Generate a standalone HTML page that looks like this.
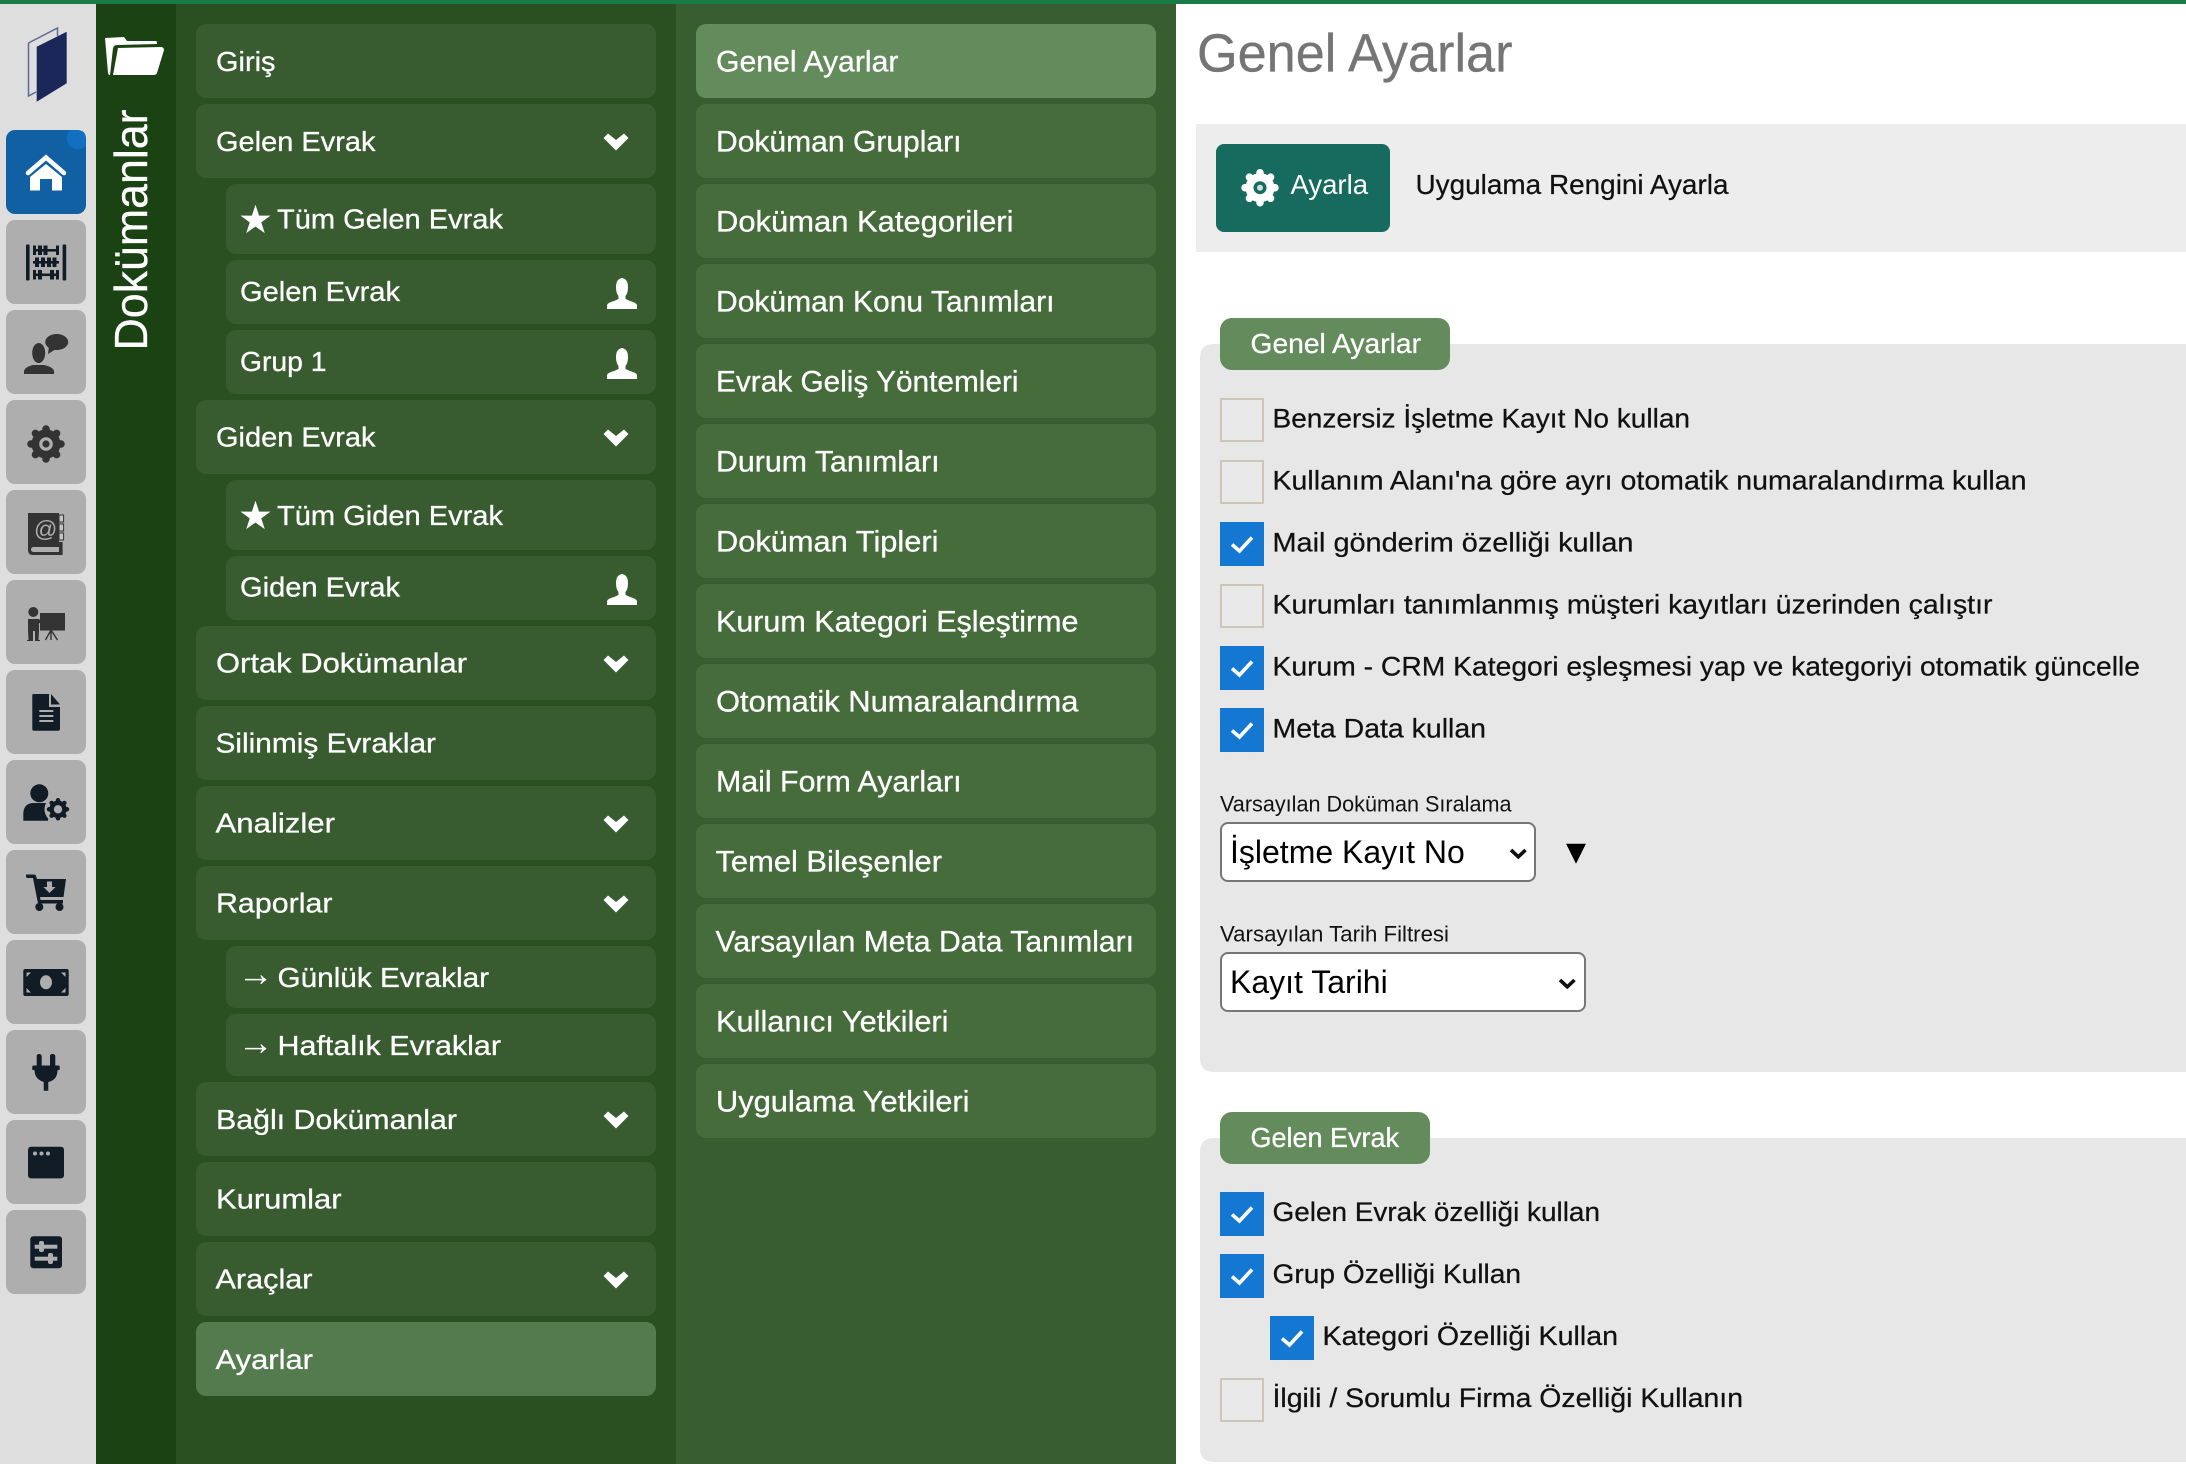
<!DOCTYPE html>
<html lang="tr"><head><meta charset="utf-8"><title>Genel Ayarlar</title>
<style>
html,body{margin:0;padding:0;width:2186px;height:1464px;overflow:hidden;background:#fff}
svg{position:absolute;left:0;top:0;display:block}
text{font-family:"Liberation Sans",sans-serif}
.m text,.c text,.w{fill:#fff;stroke:#fff;stroke-width:.3px}
.m text{font-size:28px}
.c text{font-size:30px}
.l text,.b{font-size:27px;fill:#111;stroke:#111;stroke-width:.25px}
.d{fill:#111c27}.g{fill:#333}.bg{fill:#aeaeae}
select{position:absolute;box-sizing:border-box;height:60px;left:1220px;background:#fff;border:2px solid #767676;border-radius:8px;font:32px "Liberation Sans",sans-serif;color:#000;padding:0 0 0 8px;margin:0;appearance:none;-webkit-appearance:none;outline:none}
</style></head><body>
<svg width="2186" height="1464" viewBox="0 0 2186 1464" xmlns="http://www.w3.org/2000/svg">
<defs>
<g id="gear"><circle r="14"/><g stroke-width="7.5" stroke-linecap="round"><path d="M0-15V15M-15 0H15M-10.6-10.6L10.6 10.6M-10.6 10.6L10.6-10.6"/></g></g>
<path id="chev" fill="#fff" d="M603.5 138L608 133.5L616 140L624 133.5L628.5 138L616 150.5Z"/>
<path id="usr" fill="#fff" d="M607 309V305Q608 302.5 614 301L618.5 299V296Q616 293 616 287Q616 279 622 278Q628 279 628 287Q628 293 625.5 296V299L630 301Q636 302.5 637 305V309Z"/>
<path id="chk" fill="none" stroke="#fff" stroke-width="3.6" d="M1232 1214.5L1239.5 1221L1252 1207.5"/>
</defs>
<rect width="2186" height="1464" fill="#fff"/>
<rect width="96" height="1464" fill="#dedede"/>
<rect x="96" width="80" height="1464" fill="#1b4213"/>
<rect x="176" width="500" height="1464" fill="#2a4f20"/>
<rect x="676" width="500" height="1464" fill="#375d30"/>
<rect width="2186" height="4" fill="#1b7b47"/>

<!-- logo -->
<path d="M28.5 43L57.5 28V36M28.5 43V96L36 92" fill="none" stroke="#5c6a98" stroke-width="1.5"/>
<path d="M36.7 46.7L66.7 31.7V83.3L36.7 101.7Z" fill="#1a2758"/>

<!-- rail buttons -->
<rect x="6" y="130" width="80" height="84" rx="9" fill="#1160a4"/>
<path d="M70 130H77Q86 130 86 139V146A8 8 0 0 1 70 130Z" fill="#1370c0"/>
<rect class="bg" x="6" y="220" width="80" height="84" rx="9"/>
<rect class="bg" x="6" y="310" width="80" height="84" rx="9"/>
<rect class="bg" x="6" y="400" width="80" height="84" rx="9"/>
<rect class="bg" x="6" y="490" width="80" height="84" rx="9"/>
<rect class="bg" x="6" y="580" width="80" height="84" rx="9"/>
<rect class="bg" x="6" y="670" width="80" height="84" rx="9"/>
<rect class="bg" x="6" y="760" width="80" height="84" rx="9"/>
<rect class="bg" x="6" y="850" width="80" height="84" rx="9"/>
<rect class="bg" x="6" y="940" width="80" height="84" rx="9"/>
<rect class="bg" x="6" y="1030" width="80" height="84" rx="9"/>
<rect class="bg" x="6" y="1120" width="80" height="84" rx="9"/>
<rect class="bg" x="6" y="1210" width="80" height="84" rx="9"/>

<!-- home -->
<path d="M46 164L62 177V190.5H52V179H40V190.5H30V177Z" fill="#fff"/>
<path d="M28 173L46 157.5L64 173" fill="none" stroke="#fff" stroke-width="4.5" stroke-linecap="round"/>
<!-- abacus -->
<g class="d">
<rect x="26" y="244.5" width="3.6" height="36" rx="1"/><rect x="62.6" y="244.5" width="3.6" height="36" rx="1"/>
<rect x="33" y="249" width="26" height="2.6"/><rect x="33" y="261" width="26" height="2.6"/><rect x="33" y="273.5" width="26" height="2.6"/>
<rect x="33" y="245.5" width="3" height="9.5"/><rect x="38" y="245.5" width="4" height="9.5"/><rect x="43.5" y="245.5" width="4" height="9.5"/><rect x="56" y="245.5" width="3" height="9.5"/>
<rect x="35" y="257.5" width="4" height="9.5"/><rect x="41" y="257.5" width="4" height="9.5"/><rect x="47" y="257.5" width="4" height="9.5"/><rect x="52.5" y="257.5" width="4" height="9.5"/>
<rect x="33" y="270" width="3" height="9.5"/><rect x="38" y="270" width="4" height="9.5"/><rect x="50" y="270" width="4" height="9.5"/><rect x="56" y="270" width="3" height="9.5"/>
</g>
<!-- talk -->
<g class="g">
<ellipse cx="38.7" cy="353" rx="6.5" ry="10"/>
<path d="M24 374V371Q25 367 33 365L44 365Q53 367 54 371V374Z"/>
<ellipse cx="56.7" cy="342" rx="11.5" ry="8"/>
<path d="M49 346L48 354L56 349Z"/>
</g>
<!-- gear -->
<g class="g" stroke="#333" transform="translate(46 444)"><use href="#gear"/></g>
<circle cx="46" cy="444" r="6.8" fill="#aeaeae"/><circle cx="46" cy="444" r="3.6" fill="#333"/>
<!-- address book -->
<g>
<path class="g" d="M28 513H59V547H34Q31 547 31 549.5Q31 552 34 552H59V542H62.6V555H33Q28 555 28 550Z"/>
<rect x="59" y="515" width="4.6" height="7" fill="#c4c4c4" stroke="#333"/><rect x="59" y="524" width="4.6" height="7" fill="#c4c4c4" stroke="#333"/><rect x="59" y="533" width="4.6" height="7" fill="#c4c4c4" stroke="#333"/>
<text x="34" y="537" font-size="23" fill="#aeaeae">@</text>
</g>
<!-- presentation -->
<g class="g">
<circle cx="33.3" cy="612" r="5"/>
<path d="M28 619H39L40 620L45 622.5L44 624.5L39 623V630L38.5 640H40V641H35V631H33V641H27V640H28.5L28 630Z"/>
<rect x="40" y="613" width="25" height="17.5"/>
<path d="M51 630V640M51 630L45.5 640M51 630L57.5 640" fill="none" stroke="#333" stroke-width="1.4"/>
</g>
<!-- document -->
<path class="d" d="M33.5 694H49V707H60V729Q60 730.7 58 730.7H34Q32.3 730.7 32.3 729V695Q32.3 694 33.5 694Z"/>
<path class="d" d="M51 694L60 704.5H51Z"/>
<rect x="39.3" y="710" width="14" height="2" fill="#aeaeae"/><rect x="39.3" y="715" width="14" height="2" fill="#aeaeae"/><rect x="39.3" y="720" width="14" height="2" fill="#aeaeae"/>
<!-- user gear -->
<circle class="d" cx="39.3" cy="793.3" r="9"/>
<path class="d" d="M23.3 820.7V813Q24 803 34 803H45Q48 803 50 804L48 820.7Z"/>
<circle cx="58" cy="809.3" r="13.5" fill="#aeaeae"/>
<g fill="#111c27" stroke="#111c27" transform="translate(58 809.3) scale(.6)"><use href="#gear"/></g>
<circle cx="58" cy="809.3" r="4.2" fill="#aeaeae"/>
<!-- cart -->
<g class="d">
<path d="M26 874.5H34Q35.5 874.5 36 876L37 879H66L63.5 897H40L40.6 900H63V903.5H38L33 878H27.5Q26 878 26 876Z"/>
<circle cx="39.3" cy="907" r="4"/><circle cx="59.5" cy="907" r="4"/>
</g>
<path d="M47 881.5H52V887H55.5L49.5 893L43.5 887H47Z" fill="#aeaeae"/>
<!-- money -->
<rect class="d" x="23.3" y="969" width="45.4" height="27" rx="2"/>
<ellipse cx="46" cy="982.3" rx="6" ry="7" fill="#aeaeae"/>
<path d="M26.5 972.5H31L26.5 977ZM65.5 972.5H61L65.5 977ZM26.5 992.5H31L26.5 988ZM65.5 992.5H61L65.5 988Z" fill="#aeaeae"/>
<!-- plug -->
<path class="d" d="M36.7 1056Q36.7 1054 39 1054T41.7 1056V1065.5H50V1056Q50 1054 52.5 1054T55.3 1056V1065.5H58.5Q59.7 1065.5 59.7 1067V1070H57.5Q57.5 1079 50 1081.5L48.3 1082V1090.7H43.7V1082Q34.5 1079 34.5 1070H32.3V1067Q32.3 1065.5 33.5 1065.5H36.7Z"/>
<!-- window -->
<rect class="d" x="28" y="1146.7" width="36" height="31.7" rx="3"/>
<circle cx="35" cy="1153.5" r="2" fill="#aeaeae"/><circle cx="41.5" cy="1153.5" r="2" fill="#aeaeae"/><circle cx="48" cy="1153.5" r="2" fill="#aeaeae"/>
<!-- sliders -->
<rect class="d" x="30.3" y="1236.3" width="31.7" height="32" rx="3"/>
<rect x="34.7" y="1244.7" width="22.6" height="4" fill="#aeaeae"/><rect x="34.7" y="1256.7" width="22.6" height="4" fill="#aeaeae"/>
<rect x="39" y="1241" width="5" height="11" rx="2" fill="#aeaeae"/><rect x="48" y="1253" width="5" height="11" rx="2" fill="#aeaeae"/>

<!-- section title -->
<path d="M105 38L124 37L127 41H156Q157 41 157 44L117 45Q114 45 113 48L110 75Q108 75 108 73Z" fill="#fff"/>
<path d="M118 48L162 47Q164 48 164 50L157 73Q156 75 154 75H113Z" fill="#fff"/>
<text class="w" transform="translate(147 350.5) rotate(-90)" font-size="46" textLength="241" lengthAdjust="spacingAndGlyphs">Dokümanlar</text>

<!-- column 2 -->
<g fill="#385c30">
<rect x="196" y="24" width="460" height="74" rx="10"/>
<rect x="196" y="104" width="460" height="74" rx="10"/>
<rect x="226" y="184" width="430" height="70" rx="10"/>
<rect x="226" y="260" width="430" height="64" rx="10"/>
<rect x="226" y="330" width="430" height="64" rx="10"/>
<rect x="196" y="400" width="460" height="74" rx="10"/>
<rect x="226" y="480" width="430" height="70" rx="10"/>
<rect x="226" y="556" width="430" height="64" rx="10"/>
<rect x="196" y="626" width="460" height="74" rx="10"/>
<rect x="196" y="706" width="460" height="74" rx="10"/>
<rect x="196" y="786" width="460" height="74" rx="10"/>
<rect x="196" y="866" width="460" height="74" rx="10"/>
<rect x="226" y="946" width="430" height="62" rx="10"/>
<rect x="226" y="1014" width="430" height="62" rx="10"/>
<rect x="196" y="1082" width="460" height="74" rx="10"/>
<rect x="196" y="1162" width="460" height="74" rx="10"/>
<rect x="196" y="1242" width="460" height="74" rx="10"/>
<rect x="196" y="1322" width="460" height="74" rx="10" fill="#547b4e"/>
</g>
<g class="m">
<text x="216" y="71" textLength="59.5" lengthAdjust="spacingAndGlyphs">Giriş</text>
<text x="216" y="151" textLength="159.5" lengthAdjust="spacingAndGlyphs">Gelen Evrak</text>
<text x="238" y="233" style="font-family:'DejaVu Sans',sans-serif;font-size:39px;stroke-width:0">★</text>
<text x="277" y="228.5" textLength="226" lengthAdjust="spacingAndGlyphs">Tüm Gelen Evrak</text>
<text x="240" y="301" textLength="160" lengthAdjust="spacingAndGlyphs">Gelen Evrak</text>
<text x="240" y="371" textLength="86.5" lengthAdjust="spacingAndGlyphs">Grup 1</text>
<text x="216" y="446.5" textLength="159.5" lengthAdjust="spacingAndGlyphs">Giden Evrak</text>
<text x="238" y="529" style="font-family:'DejaVu Sans',sans-serif;font-size:39px;stroke-width:0">★</text>
<text x="277" y="525" textLength="226" lengthAdjust="spacingAndGlyphs">Tüm Giden Evrak</text>
<text x="240" y="596.5" textLength="160" lengthAdjust="spacingAndGlyphs">Giden Evrak</text>
<text x="216" y="672.5" textLength="251" lengthAdjust="spacingAndGlyphs">Ortak Dokümanlar</text>
<text x="215.5" y="752.5" textLength="220.5" lengthAdjust="spacingAndGlyphs">Silinmiş Evraklar</text>
<text x="215.5" y="832.5" textLength="119.5" lengthAdjust="spacingAndGlyphs">Analizler</text>
<text x="216" y="912.5" textLength="116.5" lengthAdjust="spacingAndGlyphs">Raporlar</text>
<text x="237.5" y="985.5" style="font-size:36px;stroke-width:0">→</text>
<text x="277.5" y="987" textLength="211.5" lengthAdjust="spacingAndGlyphs">Günlük Evraklar</text>
<text x="237.5" y="1054.5" style="font-size:36px;stroke-width:0">→</text>
<text x="277.5" y="1055" textLength="223.5" lengthAdjust="spacingAndGlyphs">Haftalık Evraklar</text>
<text x="216" y="1129" textLength="241" lengthAdjust="spacingAndGlyphs">Bağlı Dokümanlar</text>
<text x="216" y="1208.5" textLength="125.5" lengthAdjust="spacingAndGlyphs">Kurumlar</text>
<text x="215.5" y="1288.5" textLength="97" lengthAdjust="spacingAndGlyphs">Araçlar</text>
<text x="215.5" y="1369" textLength="97.5" lengthAdjust="spacingAndGlyphs">Ayarlar</text>
</g>
<use href="#chev"/>
<use href="#chev" y="296"/>
<use href="#chev" y="522"/>
<use href="#chev" y="682"/>
<use href="#chev" y="762"/>
<use href="#chev" y="978"/>
<use href="#chev" y="1138"/>
<use href="#usr"/>
<use href="#usr" y="70"/>
<use href="#usr" y="296"/>

<!-- column 3 -->
<g fill="#466c3c">
<rect x="696" y="24" width="460" height="74" rx="10" fill="#648b5c"/>
<rect x="696" y="104" width="460" height="74" rx="10"/>
<rect x="696" y="184" width="460" height="74" rx="10"/>
<rect x="696" y="264" width="460" height="74" rx="10"/>
<rect x="696" y="344" width="460" height="74" rx="10"/>
<rect x="696" y="424" width="460" height="74" rx="10"/>
<rect x="696" y="504" width="460" height="74" rx="10"/>
<rect x="696" y="584" width="460" height="74" rx="10"/>
<rect x="696" y="664" width="460" height="74" rx="10"/>
<rect x="696" y="744" width="460" height="74" rx="10"/>
<rect x="696" y="824" width="460" height="74" rx="10"/>
<rect x="696" y="904" width="460" height="74" rx="10"/>
<rect x="696" y="984" width="460" height="74" rx="10"/>
<rect x="696" y="1064" width="460" height="74" rx="10"/>
</g>
<g class="c">
<text x="716" y="71.5" textLength="182.5" lengthAdjust="spacingAndGlyphs">Genel Ayarlar</text>
<text x="716" y="151.5" textLength="245.5" lengthAdjust="spacingAndGlyphs">Doküman Grupları</text>
<text x="716" y="231.5" textLength="297.5" lengthAdjust="spacingAndGlyphs">Doküman Kategorileri</text>
<text x="716" y="311.5" textLength="338.5" lengthAdjust="spacingAndGlyphs">Doküman Konu Tanımları</text>
<text x="716" y="391.5" textLength="302.5" lengthAdjust="spacingAndGlyphs">Evrak Geliş Yöntemleri</text>
<text x="716" y="471.5" textLength="223.5" lengthAdjust="spacingAndGlyphs">Durum Tanımları</text>
<text x="716" y="551.5" textLength="222.5" lengthAdjust="spacingAndGlyphs">Doküman Tipleri</text>
<text x="716" y="631.5" textLength="362.5" lengthAdjust="spacingAndGlyphs">Kurum Kategori Eşleştirme</text>
<text x="716" y="711.5" textLength="362.5" lengthAdjust="spacingAndGlyphs">Otomatik Numaralandırma</text>
<text x="716" y="791.5" textLength="245.5" lengthAdjust="spacingAndGlyphs">Mail Form Ayarları</text>
<text x="715.5" y="871.5" textLength="226.5" lengthAdjust="spacingAndGlyphs">Temel Bileşenler</text>
<text x="715.5" y="951.5" textLength="418.5" lengthAdjust="spacingAndGlyphs">Varsayılan Meta Data Tanımları</text>
<text x="716" y="1031.5" textLength="232.5" lengthAdjust="spacingAndGlyphs">Kullanıcı Yetkileri</text>
<text x="716" y="1111.5" textLength="253.5" lengthAdjust="spacingAndGlyphs">Uygulama Yetkileri</text>
</g>

<!-- content -->
<text x="1197" y="71.5" font-size="54" fill="#757575" stroke="#757575" stroke-width=".3" textLength="315.5" lengthAdjust="spacingAndGlyphs">Genel Ayarlar</text>
<rect x="1196" y="124" width="990" height="128" fill="#ededed"/>
<rect x="1216" y="144" width="174" height="88" rx="8" fill="#176b5e"/>
<g fill="#fff" stroke="#fff" transform="translate(1260 187.7)"><use href="#gear"/></g>
<circle cx="1260" cy="187.7" r="6.5" fill="#176b5e"/><circle cx="1260" cy="187.7" r="3" fill="#cfe0dc"/>
<text x="1290.5" y="194" font-size="28" fill="#fff" textLength="77.5" lengthAdjust="spacingAndGlyphs">Ayarla</text>
<text class="b" x="1415.5" y="194" style="font-size:28px" textLength="313" lengthAdjust="spacingAndGlyphs">Uygulama Rengini Ayarla</text>

<!-- fieldset 1 -->
<path d="M2186 344H1214Q1200 344 1200 358V1058Q1200 1072 1214 1072H2186Z" fill="#e7e7e7"/>
<rect x="1220" y="318" width="230" height="52" rx="12" fill="#648b5c"/>
<text class="w" x="1250.5" y="353" font-size="28" textLength="170.5" lengthAdjust="spacingAndGlyphs">Genel Ayarlar</text>

<!-- fieldset 2 -->
<path d="M2186 1138H1214Q1200 1138 1200 1152V1448Q1200 1462 1214 1462H2186Z" fill="#e7e7e7"/>
<rect x="1220" y="1112" width="210" height="52" rx="12" fill="#648b5c"/>
<text class="w" x="1250.5" y="1147" font-size="28" textLength="148.5" lengthAdjust="spacingAndGlyphs">Gelen Evrak</text>

<g fill="#e9e9e9" stroke="#cdc5b5" stroke-width="2">
<rect x="1221" y="399" width="42" height="42"/>
<rect x="1221" y="461" width="42" height="42"/>
<rect x="1221" y="585" width="42" height="42"/>
<rect x="1221" y="1379" width="42" height="42"/>
</g>
<g fill="#1477d1">
<rect x="1220" y="522" width="44" height="44"/>
<rect x="1220" y="646" width="44" height="44"/>
<rect x="1220" y="708" width="44" height="44"/>
<rect x="1220" y="1192" width="44" height="44"/>
<rect x="1220" y="1254" width="44" height="44"/>
<rect x="1270" y="1316" width="44" height="44"/>
</g>
<use href="#chk" y="-670"/>
<use href="#chk" y="-546"/>
<use href="#chk" y="-484"/>
<use href="#chk"/>
<use href="#chk" y="62"/>
<use href="#chk" x="50" y="124"/>
<g class="l">
<text x="1272.5" y="427.5" textLength="417.5" lengthAdjust="spacingAndGlyphs">Benzersiz İşletme Kayıt No kullan</text>
<text x="1272.5" y="489.5" textLength="754" lengthAdjust="spacingAndGlyphs">Kullanım Alanı'na göre ayrı otomatik numaralandırma kullan</text>
<text x="1272.5" y="551.5" textLength="361" lengthAdjust="spacingAndGlyphs">Mail gönderim özelliği kullan</text>
<text x="1272.5" y="613.5" textLength="720" lengthAdjust="spacingAndGlyphs">Kurumları tanımlanmış müşteri kayıtları üzerinden çalıştır</text>
<text x="1272.5" y="675.5" textLength="867.5" lengthAdjust="spacingAndGlyphs">Kurum - CRM Kategori eşleşmesi yap ve kategoriyi otomatik güncelle</text>
<text x="1272.5" y="737.5" textLength="213.5" lengthAdjust="spacingAndGlyphs">Meta Data kullan</text>
<text x="1272.5" y="1221" textLength="327.5" lengthAdjust="spacingAndGlyphs">Gelen Evrak özelliği kullan</text>
<text x="1272.5" y="1283" textLength="248.5" lengthAdjust="spacingAndGlyphs">Grup Özelliği Kullan</text>
<text x="1322.5" y="1345" textLength="295.5" lengthAdjust="spacingAndGlyphs">Kategori Özelliği Kullan</text>
<text x="1272.5" y="1407" textLength="470.5" lengthAdjust="spacingAndGlyphs">İlgili / Sorumlu Firma Özelliği Kullanın</text>
</g>
<text x="1220" y="811.5" font-size="22" fill="#111" textLength="291.5" lengthAdjust="spacingAndGlyphs">Varsayılan Doküman Sıralama</text>
<text x="1220" y="941.5" font-size="22" fill="#111" textLength="229" lengthAdjust="spacingAndGlyphs">Varsayılan Tarih Filtresi</text>
<text x="1566" y="860.5" font-size="26" fill="#000" style="font-family:'DejaVu Sans',sans-serif">▼</text>
</svg>

<select style="top:822px;width:316px"><option>İşletme Kayıt No</option></select>
<select style="top:952px;width:366px"><option>Kayıt Tarihi</option></select>

<svg width="2186" height="1464" viewBox="0 0 2186 1464" style="pointer-events:none" xmlns="http://www.w3.org/2000/svg">
<path d="M1511 850L1518.3 856.8L1525.5 850" fill="none" stroke="#111" stroke-width="3.6"/>
<path d="M1560 980L1567.3 986.8L1574.5 980" fill="none" stroke="#111" stroke-width="3.6"/>
</svg>
</body></html>
